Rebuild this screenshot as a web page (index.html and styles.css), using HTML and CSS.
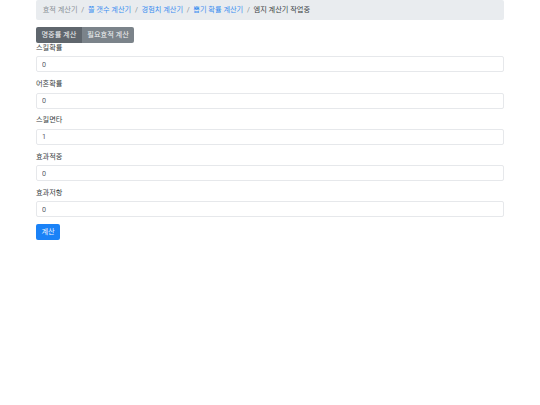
FILE: index.html
```html
<!DOCTYPE html>
<html lang="ko">
<head>
<meta charset="utf-8">
<title>효적 계산기</title>
<link rel="stylesheet" href="styles.css">
</head>
<body>
<div class="page">
  <div class="container">
    <nav class="breadcrumb">
      <span class="crumb muted">효적 계산기</span>
      <span class="sep">/</span>
      <a class="crumb link" href="#">쫄 갯수 계산기</a>
      <span class="sep">/</span>
      <a class="crumb link" href="#">경험치 계산기</a>
      <span class="sep">/</span>
      <a class="crumb link" href="#">뽑기 확률 계산기</a>
      <span class="sep">/</span>
      <span class="crumb current">엠지 계산기 작업중</span>
    </nav>
    <div class="btn-group">
      <button class="btn btn-secondary active">명중률 계산</button>
      <button class="btn btn-secondary">필요효적 계산</button>
    </div>
    <form class="form">
      <div class="form-group">
        <label class="label">스킬확률</label>
        <input class="input" type="text" value="0">
      </div>
      <div class="form-group">
        <label class="label">어혼확률</label>
        <input class="input" type="text" value="0">
      </div>
      <div class="form-group">
        <label class="label">스킬면타</label>
        <input class="input" type="text" value="1">
      </div>
      <div class="form-group">
        <label class="label">효과적중</label>
        <input class="input" type="text" value="0">
      </div>
      <div class="form-group">
        <label class="label">효과저항</label>
        <input class="input" type="text" value="0">
      </div>
      <button class="btn btn-primary" type="button">계산</button>
    </form>
  </div>
</div>
</body>
</html>
```
FILE: styles.css
```css
html, body {
  margin: 0;
  padding: 0;
  background: #fff;
}
.page {
  width: 540px;
  font-family: Roboto, "Noto Sans CJK KR", "Noto Sans", sans-serif;
  font-size: 7.2px;
  line-height: 10.1px;
  color: #3a3f44;
}
.container {
  width: 468px;
  margin: 0 auto;
}
.breadcrumb {
  display: flex;
  align-items: center;
  box-sizing: border-box;
  height: 20.25px;
  background: #e9ecef;
  border-radius: 2px;
  padding: 0 6.75px;
  margin-bottom: 6.75px;
}
.sep {
  color: #8a9096;
  padding: 0 3.7px;
}
.crumb.muted { color: #8a9096; }
.crumb.link { color: #3b8ef0; text-decoration: none; }
.crumb.current { color: #3a3f44; }
.btn-group {
  display: inline-flex;
  vertical-align: top;
}
.btn {
  box-sizing: border-box;
  height: 16px;
  font-family: inherit;
  font-size: 7.2px;
  line-height: 10px;
  padding: 0 5.5px;
  border: none;
  border-radius: 2px;
  color: #f2f3f4;
  cursor: pointer;
}
.btn-secondary {
  background: #7b838a;
}
.btn-secondary.active {
  background: #5f666d;
}
.btn-group .btn:first-child {
  border-top-right-radius: 0;
  border-bottom-right-radius: 0;
}
.btn-group .btn:last-child {
  border-top-left-radius: 0;
  border-bottom-left-radius: 0;
}
.btn-primary {
  width: 24px;
  padding: 0;
  background: #1a82f7;
  color: #eef5ff;
}
.form {
  display: block;
}
.form-group {
  margin-bottom: 6.75px;
}
.label {
  display: block;
  height: 10.1px;
  margin-bottom: 3.4px;
}
.input {
  display: block;
  box-sizing: border-box;
  width: 100%;
  height: 16px;
  padding: 0 5px;
  font-family: inherit;
  font-size: 7.2px;
  line-height: 10px;
  color: #5a6066;
  background: #fff;
  border: 1px solid #e6e8eb;
  border-radius: 2px;
  margin: 0;
  outline: none;
}
```
